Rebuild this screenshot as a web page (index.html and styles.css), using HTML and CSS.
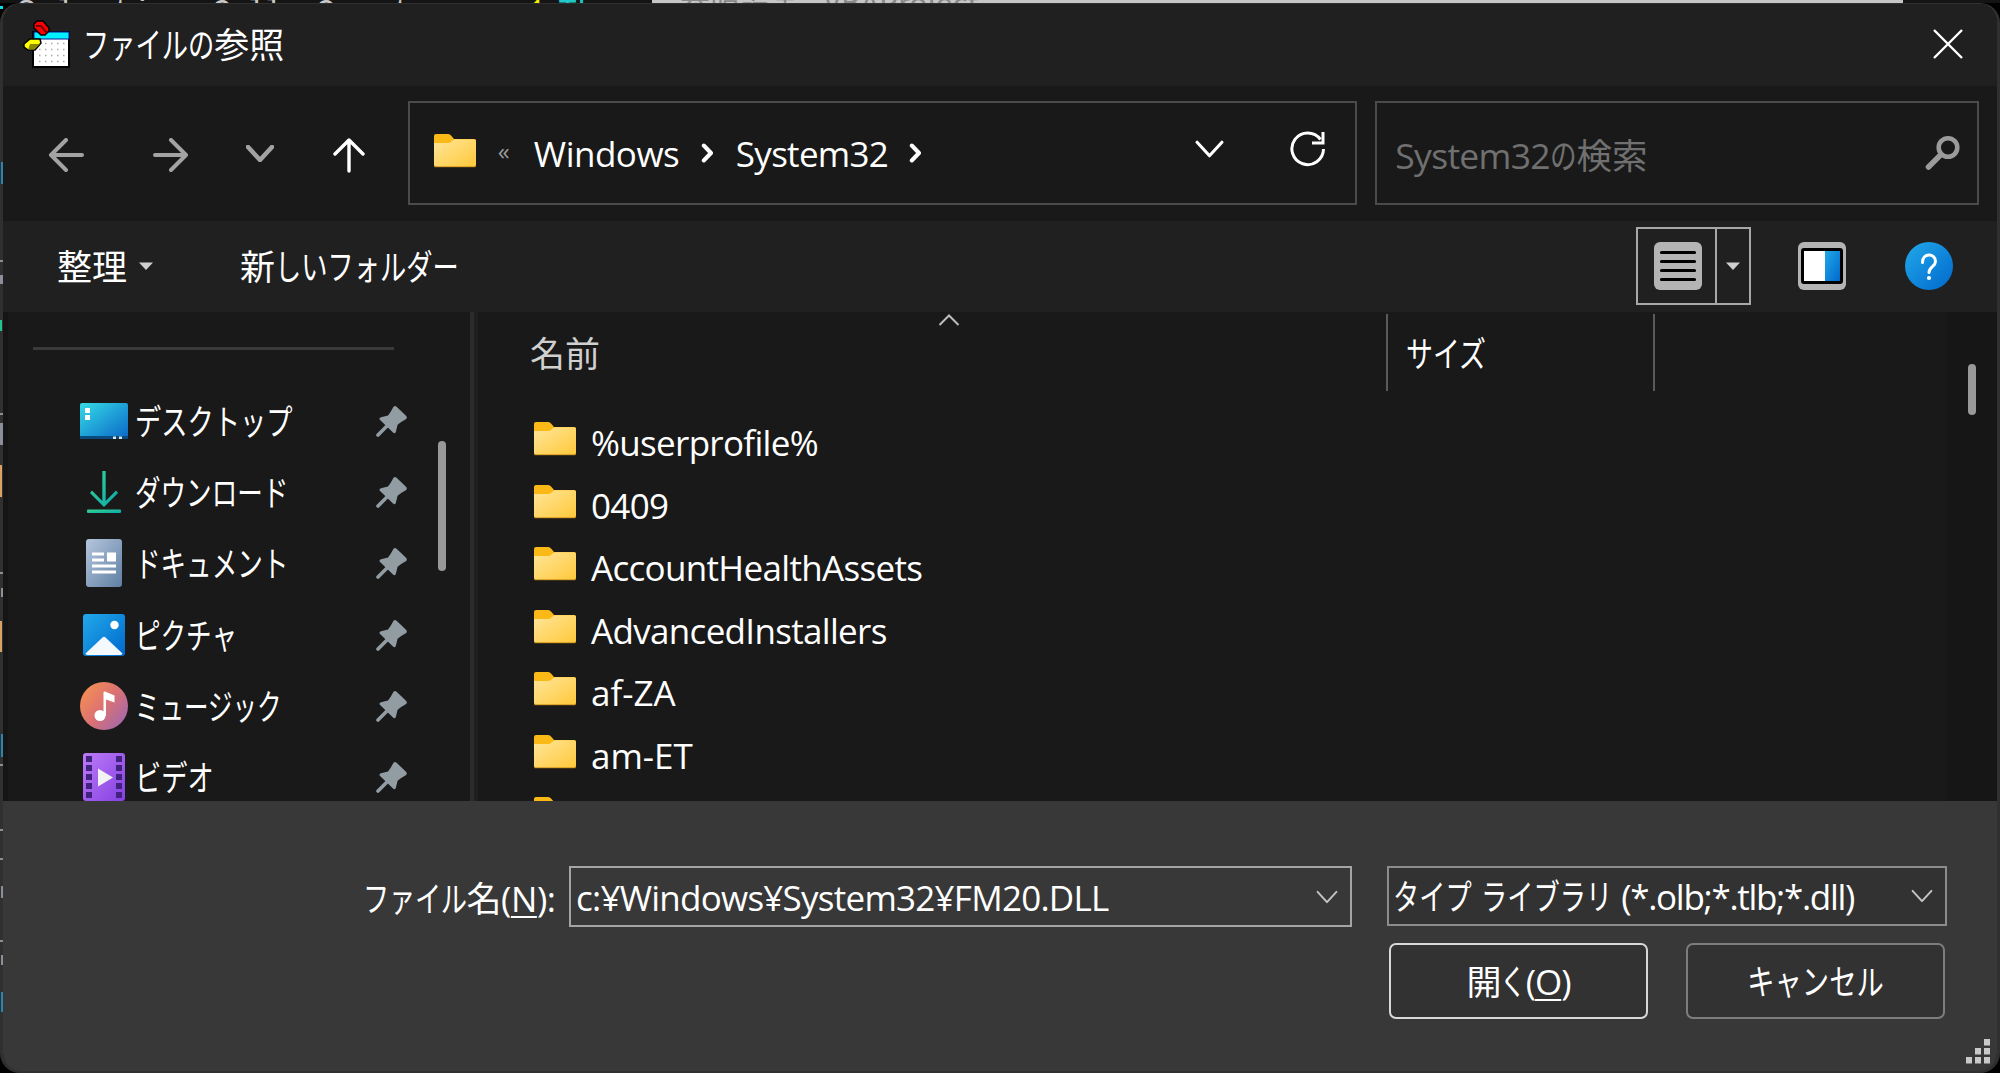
FILE: index.html
```html
<!DOCTYPE html>
<html lang="ja">
<head>
  <meta charset="UTF-8">
  <meta name="viewport" content="width=device-width, initial-scale=1.0">
  <title>ファイルの参照</title>
  <link rel="stylesheet" href="styles.css">
</head>
<body>

  <!-- Shared icons -->
  <svg class="defs" width="0" height="0">
    <defs>
      <linearGradient id="g-folder" x1="0" y1="0" x2="1" y2="1"><stop offset="0" stop-color="#ffe69a"/><stop offset="1" stop-color="#ffc83a"/></linearGradient>
      <linearGradient id="g-desktop" x1="0" y1="0" x2="1" y2="1"><stop offset="0" stop-color="#35dbe6"/><stop offset="1" stop-color="#0a66c8"/></linearGradient>
      <linearGradient id="g-down" x1="0" y1="0" x2="1" y2="1"><stop offset="0" stop-color="#3ad28e"/><stop offset="1" stop-color="#08a9ae"/></linearGradient>
      <linearGradient id="g-doc" x1="0" y1="0" x2="1" y2="1"><stop offset="0" stop-color="#b5c6dc"/><stop offset="1" stop-color="#5f7fa3"/></linearGradient>
      <linearGradient id="g-blue" x1="0" y1="0" x2="1" y2="1"><stop offset="0" stop-color="#22a9ea"/><stop offset="1" stop-color="#0068cc"/></linearGradient>
      <linearGradient id="g-music" x1="0" y1="0.1" x2="1" y2="0.9"><stop offset="0" stop-color="#f79350"/><stop offset=".5" stop-color="#dc7172"/><stop offset="1" stop-color="#9c67b4"/></linearGradient>
      <linearGradient id="g-video" x1="0" y1="0" x2="1" y2="1"><stop offset="0" stop-color="#bd7bf6"/><stop offset="1" stop-color="#8440e2"/></linearGradient>
    </defs>
    <symbol id="folder" viewBox="0 0 42 34">
      <path d="M0 2Q0 0 2 0H14Q16 0 17.500 2L20 5H40Q42 5 42 7V20H0Z" fill="#fbb917"/>
      <path d="M0 9H14Q16 9 17.500 7.500L19 6.200Q20 5.200 22 5.200H40Q42 5.200 42 7V31Q42 33 40 33H2Q0 33 0 31Z" fill="url(#g-folder)"/>
      <path d="M.5 32.700H41.500" stroke="#d79a1e" stroke-width="1"/>
    </symbol>
    <symbol id="pin" viewBox="0 0 32 32">
      <path d="M2 30L12 20" stroke="#929ca3" stroke-width="3.600" stroke-linecap="round"/>
      <path d="M17.500 1.800Q19 .4 20.600 1.700L30 10.800Q31.800 12.800 29.800 14.200Q24 17.300 21.600 19.800L19.800 27Q18.800 29 17 27.600L3.800 14.800Q2.800 13 5 12.300L12 10.500Q14.600 7.500 17.500 1.800Z" fill="#929ca3"/>
    </symbol>
    <symbol id="chevron" viewBox="0 0 28 17">
      <path d="M2 2L14 15L26 2" fill="none" stroke="currentColor" stroke-linecap="round" stroke-linejoin="round"/>
    </symbol>
    <symbol id="crumb" viewBox="0 0 13 20">
      <path d="M2.800 2.500L10 10L2.800 17.500" fill="none" stroke="#fff" stroke-width="4" stroke-linecap="round" stroke-linejoin="round"/>
    </symbol>
    <symbol id="caret" viewBox="0 0 14 8"><path d="M0 .5H14L7 8Z" fill="#cfcfcf"/></symbol>
  </svg>

  <!-- Editor line behind the dialog -->
  <div class="behind">
    <span class="b1">Selection.</span><span class="b2">Cells.</span><span class="b3">Count</span><span class="b4">1</span><span class="b5">Then</span>
    <div class="behind-window"><span>参照設定 - VBAProject</span></div>
  </div>

  <div class="window">
    <header class="titlebar">
      <svg class="app-icon" viewBox="0 0 48 48">
        <path d="M10 12H46V47H10Z" fill="#fff" stroke="#000" stroke-width="2"/>
        <rect x="11" y="12" width="35" height="7" fill="#00f0ff" stroke="#0a1a90" stroke-width="1"/>
        <path d="M16 23.500H45M16 29.500H45M16 35.500H45M16 41.500H45" stroke="#aaa" stroke-width="1.500" stroke-dasharray="1.500 4.500"/>
        <path d="M11 4L14 1H20L26 8V11L22 15H18L11 8Z" fill="#f00" stroke="#000" stroke-width="1.500"/>
        <path d="M13 6H18L24 13" fill="none" stroke="#700" stroke-width="2"/>
        <path d="M1 24L7 19H17L18 23L12 30H5L1 27Z" fill="#ff0" stroke="#000" stroke-width="1.500"/>
        <path d="M7 24H17L11 29.500H5Z" fill="#8a8a00"/>
      </svg>
      <h1><span class="kana n5">ファイルの</span>参照</h1>
      <svg class="close" viewBox="0 0 32 32"><path d="M2 2L30 30M30 2L2 30" stroke="#fff" stroke-width="2.400"/></svg>
    </header>

    <nav class="navbar">
      <div class="nav-buttons">
        <svg class="back" viewBox="0 0 36 34"><path d="M18 2L3 17L18 32M3 17H34" /></svg>
        <svg class="forward" viewBox="0 0 36 34"><path d="M18 2L33 17L18 32M33 17H2" /></svg>
        <svg class="recent"><use href="#chevron"/></svg>
        <svg class="up" viewBox="0 0 32 36"><path d="M2 17L16 3L30 17M16 3V34"/></svg>
      </div>
      <div class="address">
        <svg class="folder"><use href="#folder"/></svg>
        <span class="more">«</span>
        <span class="crumb-text">Windows</span>
        <svg class="crumb"><use href="#crumb"/></svg>
        <span class="crumb-text sys">System32</span>
        <svg class="crumb"><use href="#crumb"/></svg>
        <svg class="drop"><use href="#chevron"/></svg>
        <svg class="refresh" viewBox="0 0 36 36">
          <path d="M33.500 18A15.800 15.800 0 1 1 30.500 8.500" />
          <path d="M33 1V12H22"/>
        </svg>
      </div>
      <div class="search">
        <span class="search-text"><span class="search-name">System32</span><span class="kana n1">の</span>検索</span>
        <svg viewBox="0 0 36 36"><circle cx="23" cy="12.500" r="9.300" fill="none" stroke="#9b9b9b" stroke-width="4.600"/><path d="M16 19.500L3.500 32" stroke="#9b9b9b" stroke-width="5.500" stroke-linecap="round"/></svg>
      </div>
    </nav>

    <div class="toolbar">
      <span class="organize">整理</span>
      <svg class="caret"><use href="#caret"/></svg>
      <span class="new-folder">新<span class="kana n7">しいフォルダー</span></span>
      <div class="view-button">
        <div class="view-main">
          <svg viewBox="0 0 48 48"><rect width="48" height="48" rx="6" fill="#b4b4b4"/><path d="M7.500 10.500H40.500M7.500 19.500H40.500M7.500 28.500H40.500M7.500 37.500H40.500" stroke="#000" stroke-width="3.200" stroke-linecap="round"/></svg>
        </div>
        <div class="view-drop"><svg class="caret"><use href="#caret"/></svg></div>
      </div>
      <svg class="preview" viewBox="0 0 48 48">
        <rect width="48" height="48" rx="6" fill="#b4b4b4"/>
        <rect x="3" y="6" width="42" height="36" rx="3" fill="#000"/>
        <rect x="6" y="9" width="21" height="30" fill="#fff"/>
        <rect x="27" y="9" width="15" height="30" fill="url(#g-blue)"/>
      </svg>
      <svg class="help" viewBox="0 0 48 48">
        <circle cx="24" cy="24" r="24" fill="url(#g-blue)"/>
        <path d="M17.500 20.500C17.500 10.500 30.500 11 30.500 19.500C30.500 24.500 24 25 24 30.500" fill="none" stroke="#fff" stroke-width="3" stroke-linecap="round"/>
        <circle cx="24" cy="36" r="2.100" fill="#fff"/>
      </svg>
    </div>

    <main class="content">
      <aside class="sidebar">
        <div class="side-list">
          <hr>
          <div class="side-item">
            <svg class="side-icon" viewBox="0 0 48 48">
              <rect y="6" width="48" height="36" rx="2" fill="url(#g-desktop)"/>
              <path d="M0 39H48V40Q48 42 46 42H2Q0 42 0 40Z" fill="#0a4a80"/>
              <path d="M5 11H10V16H5ZM5 18H10V23H5Z" fill="#fff"/>
              <path d="M33 39.500H36V42H33ZM39 39.500H42V42H39Z" fill="#dbe8f4"/>
            </svg>
            <span class="kana">デスクトップ</span><svg class="pin"><use href="#pin"/></svg>
          </div>
          <div class="side-item">
            <svg class="side-icon" viewBox="0 0 48 48">
              <path d="M22.300 3H25.700V33L36 22.500L38 25L24 39L10 25L12 22.500L22.300 33Z" fill="url(#g-down)"/>
              <rect x="7" y="41.500" width="34" height="3.600" rx="1" fill="url(#g-down)"/>
            </svg>
            <span class="kana tight">ダウンロード</span><svg class="pin"><use href="#pin"/></svg>
          </div>
          <div class="side-item">
            <svg class="side-icon" viewBox="0 0 48 48">
              <rect x="6" width="36" height="48" rx="3" fill="url(#g-doc)"/>
              <path d="M12 13.500H24V16.500H12ZM12 19.500H24V22.500H12ZM27 13.500H36V22.500H27ZM12 25.500H36V28.500H12ZM12 31.500H36V34.500H12Z" fill="#fff"/>
            </svg>
            <span class="kana tight">ドキュメント</span><svg class="pin"><use href="#pin"/></svg>
          </div>
          <div class="side-item">
            <svg class="side-icon" viewBox="0 0 48 48">
              <rect x="3" y="3" width="42" height="42" rx="3" fill="url(#g-blue)"/>
              <circle cx="34.500" cy="14" r="4.200" fill="#fff"/>
              <path d="M22.500 26.500Q24 25 25.500 26.500L42.500 42.500Q42 44 40 44H8Q6 44 5.500 42.500Z" fill="#f4f9fe"/>
            </svg>
            <span class="kana tight">ピクチャ</span><svg class="pin"><use href="#pin"/></svg>
          </div>
          <div class="side-item">
            <svg class="side-icon" viewBox="0 0 48 48">
              <circle cx="24" cy="24" r="24" fill="url(#g-music)"/>
              <circle cx="20" cy="33.500" r="5.500" fill="#fff"/>
              <path d="M23.500 34V10Q24 9.300 25 9.600L34.500 13.500V20.500L26 17.500V34Z" fill="#fff"/>
            </svg>
            <span class="kana tighter">ミュージック</span><svg class="pin"><use href="#pin"/></svg>
          </div>
          <div class="side-item">
            <svg class="side-icon" viewBox="0 0 48 48">
              <rect x="3" width="42" height="48" rx="3" fill="url(#g-video)"/>
              <path d="M9 3V48M39 3V48" stroke="#43217f" stroke-width="6" stroke-dasharray="6 3"/>
              <path d="M18 15.500L33 24.500L18 33.500Z" fill="#f3f3f3"/>
            </svg>
            <span class="kana">ビデオ</span><svg class="pin"><use href="#pin"/></svg>
          </div>
        </div>
        <div class="side-scroll"></div>
      </aside>

      <section class="files">
        <div class="columns">
          <div class="col-name">名前<svg class="sort" viewBox="0 0 22 12"><path d="M1.500 11L11 1.500L20.500 11" fill="none" stroke="#bdbdbd" stroke-width="2"/></svg></div>
          <div class="col-size"><span class="kana">サイズ</span></div>
        </div>
        <div class="file-list">
          <div class="file"><svg class="folder"><use href="#folder"/></svg><span>%userprofile%</span></div>
          <div class="file"><svg class="folder"><use href="#folder"/></svg><span>0409</span></div>
          <div class="file"><svg class="folder"><use href="#folder"/></svg><span>AccountHealthAssets</span></div>
          <div class="file"><svg class="folder"><use href="#folder"/></svg><span>AdvancedInstallers</span></div>
          <div class="file"><svg class="folder"><use href="#folder"/></svg><span class="wide">af-ZA</span></div>
          <div class="file"><svg class="folder"><use href="#folder"/></svg><span class="wide">am-ET</span></div>
          <div class="file"><svg class="folder"><use href="#folder"/></svg></div>
        </div>
      </section>
      <div class="files-scroll"><div class="thumb"></div></div>
    </main>

    <footer class="footer">
      <div class="fields">
        <label><span class="kana n4">ファイル</span>名(<u>N</u>):</label>
        <div class="filename"><span>c:¥Windows¥System32¥FM20.DLL</span><svg class="combo"><use href="#chevron"/></svg></div>
        <div class="filetype"><span><span class="kana n3">タイプ</span> <span class="kana n5">ライブラリ</span> <span class="masks">(*.olb;*.tlb;*.dll)</span></span><svg class="combo"><use href="#chevron"/></svg></div>
      </div>
      <div class="actions">
        <button class="open">開<span class="kana n1">く</span>(<u>O</u>)</button>
        <button class="cancel"><span class="kana">キャンセル</span></button>
      </div>
      <svg class="grip" viewBox="0 0 25 25"><path d="M18 0H24V6.500H18ZM9 9H15V15.500H9ZM18 9H24V15.500H18ZM0 18H6V24.500H0ZM9 18H15V24.500H9ZM18 18H24V24.500H18Z" fill="#c9c9c9"/></svg>
    </footer>
  </div>

  <!-- Editor text showing through at the left edge -->
  <svg class="edge" viewBox="0 0 3 1073">
    <path d="M0 6H3V9H0Z" fill="#00e0e8"/>
    <path d="M1 162H3V184H1ZM1 734H3V757H1ZM1 992H3V1012H1Z" fill="#2a86ae"/>
    <path d="M0 320H2V331H0Z" fill="#22c48a"/>
    <path d="M0 465H2V497H0ZM0 621H2V652H0Z" fill="#d9a463"/>
    <path d="M0 260H3V262H0ZM0 275H3V284H0ZM0 413H3V415H0ZM0 423H3V445H0ZM0 572H3V574H0ZM1 588H3V597H1ZM0 764H3V766H0ZM0 829H3V831H0ZM0 858H3V860H0ZM1 886H3V898H1ZM0 940H3V942H0ZM1 955H3V965H1Z" fill="#8a8f98"/>
  </svg>
</body>
</html>
```

FILE: styles.css
```css
* {
  box-sizing: border-box;
}

body {
  margin: 0;
  width: 2000px;
  height: 1073px;
  overflow: hidden;
  background: #000;
  color: #fff;
  font-family: "Open Sans", "Noto Sans CJK JP", sans-serif;
  font-size: 35px;
  line-height: 48px;
}

svg {
  display: block;
  flex: none;
}

.defs {
  position: absolute;
}

/* Narrow UI kana: each glyph takes 3/4 em */
.kana {
  display: inline-block;
  transform: scaleX(0.75);
  transform-origin: left;
  white-space: nowrap;
}

.kana.tight { transform: scaleX(0.73); }
.kana.tighter { transform: scaleX(0.7); }

.n1 { margin-right: -0.25em; }
.n3 { margin-right: -0.75em; }
.n4 { margin-right: -1em; }
.n5 { margin-right: -1.25em; }
.n7 { margin-right: -1.75em; }

/* Strip behind the dialog */
.behind {
  display: flex;
  height: 3px;
  padding-left: 17px;
  overflow: hidden;
  background: #141414;
  color: #c8c8c8;
  font-family: "Liberation Mono", monospace;
  font-size: 32px;
  line-height: 3px;
}

.behind span {
  flex: none;
  height: 3px;
  padding-top: 11px;
}

.b1 { width: 195px; }
.b2 { width: 104px; letter-spacing: -2px; }
.b3 { width: 211px; }
.b4 { width: 31px; color: #f2f200; }
.b5 { width: 94px; color: #20c8c8; }

.behind-window {
  width: 1251px;
  height: 3px;
  padding-left: 28px;
  overflow: hidden;
  background: #c6c6c6;
  color: #888;
  font-family: "Noto Sans CJK JP", sans-serif;
  font-size: 30px;
}

.behind .behind-window span {
  display: block;
  padding: 0;
}

.edge {
  position: absolute;
  left: 0;
  top: 0;
  width: 3px;
  height: 1073px;
}

/* Dialog */
.window {
  display: flex;
  flex-direction: column;
  width: 2000px;
  height: 1070px;
  border: solid #303030;
  border-width: 1px 3px 2px;
  border-radius: 20px;
  overflow: hidden;
  background: #191919;
}

.titlebar {
  display: flex;
  align-items: center;
  height: 82px;
  padding: 0 33px 3px 20px;
  background: #202020;
}

.app-icon {
  width: 48px;
  height: 48px;
  margin-right: 12px;
}

h1 {
  flex: 1;
  margin: 0;
  padding-top: 2px;
  font-size: 35px;
  font-weight: 400;
}

.close {
  width: 32px;
  height: 32px;
}

/* Navigation */
.navbar {
  display: flex;
  height: 135px;
  padding: 15px 18px 16px 0;
}

.nav-buttons {
  display: flex;
  align-items: center;
  width: 405px;
  padding: 3px 0 0 45px;
  color: #a3a3a3;
}

.nav-buttons path {
  fill: none;
  stroke: #a3a3a3;
  stroke-width: 4;
  stroke-linecap: round;
  stroke-linejoin: round;
}

.back,
.forward {
  width: 36px;
  height: 34px;
}

.forward { margin-left: 69px; }

.recent {
  width: 28px;
  height: 17px;
  margin: -2px 0 0 57px;
  stroke-width: 4.5;
}

.up {
  width: 32px;
  height: 36px;
  margin-left: 59px;
}

.up path {
  stroke: #fff;
  stroke-width: 3.4;
}

.address,
.search {
  display: flex;
  align-items: center;
  border: 2px solid #4b4b4b;
}

.address {
  width: 950px;
  padding-left: 24px;
}

.folder {
  width: 42px;
  height: 34px;
}

.address .folder { margin-top: -5px; }

.more {
  width: 59px;
  padding-left: 22px;
  margin: -4px -1px 0 0;
  color: #9a9a9a;
  font-size: 24px;
}

.crumb-text {
  flex: none;
  width: 167px;
  padding-top: 2px;
  letter-spacing: -0.5px;
}

.crumb {
  width: 13px;
  height: 20px;
  margin-right: 22px;
}

.sys {
  width: 173px;
  letter-spacing: -0.7px;
}

.address .sys + .crumb { margin-right: auto; }

.drop {
  width: 29px;
  height: 18px;
  margin: -8px 66px 0 0;
  stroke-width: 3;
}

.refresh {
  width: 36px;
  height: 36px;
  margin: -9px 29px 0 0;
  fill: none;
  stroke: #fff;
  stroke-width: 3;
}

.search {
  justify-content: space-between;
  width: 604px;
  margin-left: 18px;
  padding: 0 16px 0 18px;
  color: #707070;
}

.search-text {
  padding-top: 4px;
  font-size: 35.5px;
}

.search-name {
  letter-spacing: -0.7px;
}

.search svg {
  width: 36px;
  height: 36px;
}

/* Toolbar */
.toolbar {
  display: flex;
  align-items: center;
  height: 91px;
  padding: 0 0 2px 54px;
  background: #202020;
}

.caret {
  width: 14px;
  height: 8px;
}

.organize {
  width: 82px;
  padding-top: 2px;
}

.new-folder {
  width: 1483px;
  padding: 2px 0 0 87px;
}

.view-button {
  display: flex;
  width: 115px;
  height: 78px;
  margin-right: 47px;
  border: 2px solid #a8a8a8;
}

.view-main {
  display: flex;
  align-items: center;
  width: 79px;
  padding-left: 16px;
  border-right: 2px solid #a8a8a8;
}

.view-drop {
  display: flex;
  align-items: center;
  padding-left: 9px;
}

.view-main svg,
.preview,
.help {
  width: 48px;
  height: 48px;
}

.help { margin-left: 59px; }

/* Folder tree */
.content {
  display: flex;
  height: 489px;
  overflow: hidden;
}

.sidebar {
  display: flex;
  width: 471px;
  border-left: 5px solid #151515;
  border-right: 4px solid #2b2b2b;
}

.side-list {
  width: 430px;
  padding: 35px 0 0 25px;
}

.side-list hr {
  width: 361px;
  height: 3px;
  margin: 0 0 35px;
  border: 0;
  background: #3a3a3a;
}

.side-item {
  display: flex;
  align-items: center;
  height: 71.3px;
  padding-left: 47px;
}

.side-item .kana {
  flex: none;
  width: 241px;
  padding-top: 2px;
  margin-left: -1px;
}

.side-icon {
  width: 48px;
  height: 48px;
  margin-right: 8px;
}

.pin {
  width: 32px;
  height: 32px;
}

.side-scroll {
  width: 8px;
  height: 130px;
  margin-top: 129px;
  border-radius: 4px;
  background: #999;
}

/* File list */
.files {
  width: 1472px;
  border-left: 4px solid #1f1f1f;
}

.columns {
  display: flex;
  height: 79px;
  padding-top: 2px;
  color: #d0d0d0;
}

.col-name {
  display: flex;
  width: 910px;
  padding: 16px 0 0 52px;
  border-right: 2px solid #5a5a5a;
}

.sort {
  width: 22px;
  height: 12px;
  margin: -16px 0 0 338px;
}

.col-size {
  width: 267px;
  padding: 16px 0 0 18px;
  border-right: 2px solid #5a5a5a;
  color: #fff;
}

.col-size .kana {
  transform: scaleX(0.77);
}

.file-list {
  padding: 21px 0 0 56px;
}

.file {
  display: flex;
  align-items: center;
  height: 62.5px;
}

.file .folder {
  margin: -8px 15px 0 0;
}

.file span { letter-spacing: -0.68px; }
.file .wide { letter-spacing: 0; }

.files-scroll {
  flex: 1;
  padding: 52px 0 0 22px;
  background: #161616;
}

.thumb {
  width: 8px;
  height: 51px;
  border-radius: 4px;
  background: #999;
}

/* Bottom panel */
.footer {
  position: relative;
  flex: 1;
  padding-top: 65px;
  background: #383838;
}

.fields {
  display: flex;
  height: 61px;
}

label {
  width: 206px;
  margin-left: 360px;
  padding-top: 9px;
  letter-spacing: -0.4px;
  white-space: nowrap;
}

u {
  text-decoration-thickness: 2px;
  text-underline-offset: 4px;
}

.filename,
.filetype {
  display: flex;
  align-items: center;
  justify-content: space-between;
  border: 2px solid #a5a5a5;
  white-space: nowrap;
}

.filename {
  width: 783px;
  padding: 0 12px 0 5px;
}

.filename span {
  padding-top: 2px;
  letter-spacing: -0.75px;
}

.filetype {
  width: 560px;
  height: 60px;
  margin-left: 35px;
  padding: 0 12px 0 4px;
  border-color: #8c8c8c;
  background: #323232;
}

.filetype > span { padding-top: 2px; }

.masks { letter-spacing: -1.3px; }

.combo {
  width: 22px;
  height: 14px;
  color: #c4c4c4;
  stroke-width: 2.5;
}

.actions {
  display: flex;
  gap: 38px;
  margin: 16px 0 0 1386px;
}

button {
  width: 259px;
  height: 76px;
  padding: 2px 0 0;
  border: 2px solid #7d7d7d;
  border-radius: 7px;
  background: #323232;
  color: #fff;
  font: inherit;
}

.open {
  border-color: #d8d8d8;
  letter-spacing: -1px;
}

.cancel .kana {
  transform: scaleX(0.78);
  transform-origin: center;
}

.grip {
  position: absolute;
  right: 6px;
  bottom: 7px;
  width: 25px;
  height: 25px;
}
```
